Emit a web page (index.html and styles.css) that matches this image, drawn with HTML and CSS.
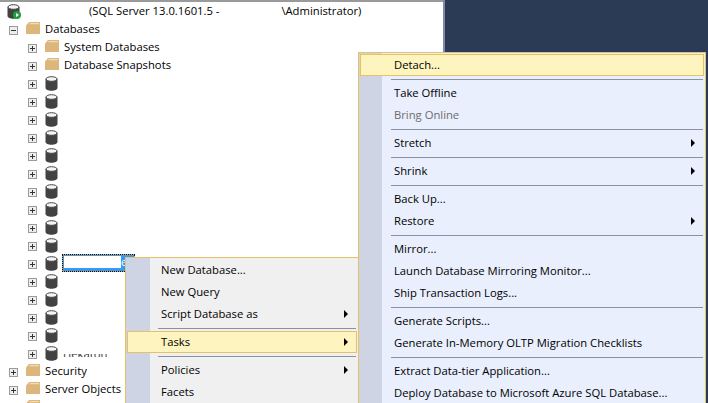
FILE: index.html
```html
<!DOCTYPE html>
<html>
    <head>
        <title>Object Explorer</title>
        <link rel="stylesheet" href="styles.css">
    </head>
    <body>
        <svg class="defs" width="0" height="0">
            <symbol id="db" viewBox="0 0 13 15">
                <path d="M.5 3v9c0 1.500 2.700 2.700 6 2.700s6-1.200 6-2.700V3z" fill="#424242"/>
                <ellipse cx="6.500" cy="3" rx="5.500" ry="2.300" fill="#f4f4f4" stroke="#424242"/>
            </symbol>
            <symbol id="folder" viewBox="0 0 14 12">
                <path d="M0 3.500L3 0h11v12H0z" fill="#dcb67a"/>
                <path d="M4 1h9v1.300H2.800z" fill="#efdcb9"/>
            </symbol>
        </svg>

        <div class="explorer">
            <div class="tree">
                <div class="row server">
                    <svg class="icon db"><use href="#db"/></svg>
                    <svg class="play" viewBox="0 0 8 8"><circle cx="4" cy="4" r="4" fill="#1f9e3c"/><path d="M3 2l3 2-3 2z" fill="#fff"/></svg>
                    <span class="label server-label">(SQL Server 13.0.1601.5 - <span class="blank"></span>\Administrator)</span>
                </div>
                <div class="row lvl1"><span class="exp minus"></span><svg class="icon"><use href="#folder"/></svg><span class="label">Databases</span></div>
                <div class="row lvl2"><span class="exp"></span><svg class="icon"><use href="#folder"/></svg><span class="label">System Databases</span></div>
                <div class="row lvl2"><span class="exp"></span><svg class="icon"><use href="#folder"/></svg><span class="label">Database Snapshots</span></div>
                <div class="row lvl2"><span class="exp"></span><svg class="icon db"><use href="#db"/></svg></div>
                <div class="row lvl2"><span class="exp"></span><svg class="icon db"><use href="#db"/></svg></div>
                <div class="row lvl2"><span class="exp"></span><svg class="icon db"><use href="#db"/></svg></div>
                <div class="row lvl2"><span class="exp"></span><svg class="icon db"><use href="#db"/></svg></div>
                <div class="row lvl2"><span class="exp"></span><svg class="icon db"><use href="#db"/></svg></div>
                <div class="row lvl2"><span class="exp"></span><svg class="icon db"><use href="#db"/></svg></div>
                <div class="row lvl2"><span class="exp"></span><svg class="icon db"><use href="#db"/></svg></div>
                <div class="row lvl2"><span class="exp"></span><svg class="icon db"><use href="#db"/></svg></div>
                <div class="row lvl2"><span class="exp"></span><svg class="icon db"><use href="#db"/></svg></div>
                <div class="row lvl2"><span class="exp"></span><svg class="icon db"><use href="#db"/></svg></div>
                <div class="row lvl2"><span class="exp"></span><svg class="icon db"><use href="#db"/></svg><span class="selected"><span class="sel-fill"><span class="sel-white"></span><span class="sel-end">e</span></span></span></div>
                <div class="row lvl2"><span class="exp"></span><svg class="icon db"><use href="#db"/></svg></div>
                <div class="row lvl2"><span class="exp"></span><svg class="icon db"><use href="#db"/></svg></div>
                <div class="row lvl2"><span class="exp"></span><svg class="icon db"><use href="#db"/></svg></div>
                <div class="row lvl2"><span class="exp"></span><svg class="icon db"><use href="#db"/></svg></div>
                <div class="row lvl2"><span class="exp"></span><svg class="icon db"><use href="#db"/></svg><span class="label cut">Hekaton</span></div>
                <div class="row lvl1"><span class="exp"></span><svg class="icon"><use href="#folder"/></svg><span class="label">Security</span></div>
                <div class="row lvl1"><span class="exp"></span><svg class="icon"><use href="#folder"/></svg><span class="label">Server Objects</span></div>
                <div class="row lvl1"><span class="exp"></span><svg class="icon"><use href="#folder"/></svg><span class="label">Replication</span></div>
            </div>
        </div>
        <div class="backdrop"></div>

        <div class="menu menu-main">
            <div class="item">New Database...</div>
            <div class="item">New Query</div>
            <div class="item arrow">Script Database as</div>
            <div class="sep"></div>
            <div class="item arrow hover">Tasks</div>
            <div class="sep"></div>
            <div class="item arrow">Policies</div>
            <div class="item">Facets</div>
        </div>

        <div class="menu menu-tasks">
            <div class="item hover">Detach...</div>
            <div class="sep"></div>
            <div class="item">Take Offline</div>
            <div class="item off">Bring Online</div>
            <div class="sep"></div>
            <div class="item arrow">Stretch</div>
            <div class="sep"></div>
            <div class="item arrow">Shrink</div>
            <div class="sep"></div>
            <div class="item">Back Up...</div>
            <div class="item arrow">Restore</div>
            <div class="sep"></div>
            <div class="item">Mirror...</div>
            <div class="item">Launch Database Mirroring Monitor...</div>
            <div class="item">Ship Transaction Logs...</div>
            <div class="sep"></div>
            <div class="item">Generate Scripts...</div>
            <div class="item">Generate In-Memory OLTP Migration Checklists</div>
            <div class="sep"></div>
            <div class="item">Extract Data-tier Application...</div>
            <div class="item">Deploy Database to Microsoft Azure SQL Database...</div>
        </div>
    </body>
</html>
```

FILE: styles.css
```css
html, body{
    margin: 0;
    height: 100%;
}
body{
    width: 708px;
    height: 403px;
    overflow: hidden;
    position: relative;
    display: flex;
    background-color: #2b3a55;
    font-family: "Open Sans", sans-serif;
    font-size: 11.25px;
    color: #000;
}
.defs{
    position: absolute;
}
.explorer{
    width: 443px;
    height: 403px;
    box-sizing: border-box;
    border-top: 2px solid #9a9a9a;
    background-color: white;
    overflow: hidden;
}
.tree{
    margin-top: -1px;
}
.backdrop{
    width: 2px;
    background-color: #7e8aa6;
}
.row{
    height: 18px;
    display: flex;
    align-items: center;
    position: relative;
    white-space: nowrap;
}
.server{
    padding-left: 7px;
}
.lvl1{
    padding-left: 9px;
}
.lvl2{
    padding-left: 28px;
}
.exp{
    width: 7px;
    height: 7px;
    margin-right: 8px;
    margin-top: 4px;
    border: 1px solid #9b9b9b;
    background: linear-gradient(#333, #333) center / 5px 1px no-repeat,
                linear-gradient(#333, #333) center / 1px 5px no-repeat,
                #eee;
}
.exp.minus{
    background: linear-gradient(#333, #333) center / 5px 1px no-repeat, #eee;
}
.icon{
    width: 14px;
    height: 12px;
    margin-right: 5px;
    flex: none;
}
.icon.db{
    width: 13px;
    height: 15px;
    margin-right: 4px;
    margin-top: 2px;
}
.play{
    position: absolute;
    left: 13px;
    top: 10px;
    width: 8px;
    height: 8px;
}
.server-label{
    margin-left: 65px;
}
.blank{
    display: inline-block;
    width: 59px;
}
.selected{
    width: 73px;
    height: 18px;
    margin-top: 2px;
    box-sizing: border-box;
    border: 1px dotted #111;
    background-color: #e8a33a;
}
.sel-fill{
    display: flex;
    height: 100%;
    box-sizing: border-box;
    padding: 1px 0 3px 1px;
    background-color: #3399ff;
}
.sel-white{
    display: block;
    width: 57px;
    background-color: white;
}
.sel-end{
    color: white;
    font-size: 10px;
    line-height: 12px;
}
.cut{
    height: 3px;
    overflow: hidden;
    align-self: flex-end;
    margin-bottom: 4px;
    margin-left: 1px;
    line-height: 0;
    color: #333;
}
.menu{
    position: absolute;
    box-sizing: border-box;
    padding: 1px;
    border: 1px solid #e5c365;
}
.menu-main{
    left: 125px;
    top: 257px;
    width: 234px;
    height: 160px;
    background: linear-gradient(#ced4e4, #ced4e4) left / 24px 100% no-repeat, #f0f0f0;
}
.menu-tasks{
    left: 358px;
    top: 52px;
    width: 348px;
    height: 360px;
    background: linear-gradient(#ced4e4, #ced4e4) left / 23px 100% no-repeat, #e9effd;
}
.item{
    height: 22px;
    line-height: 21px;
    box-sizing: border-box;
    padding-left: 34px;
    position: relative;
    white-space: nowrap;
}
.item.off{
    color: #6d6d6d;
}
.item.hover{
    background-color: #fdf4bf;
    border: 1px solid #e5c365;
    padding-left: 33px;
    line-height: 19px;
}
.arrow::after{
    content: "";
    position: absolute;
    right: 9px;
    top: 7px;
    border-left: 4px solid #000;
    border-top: 4px solid transparent;
    border-bottom: 4px solid transparent;
}
.hover.arrow::after{
    top: 6px;
    right: 8px;
}
.sep{
    height: 1px;
    margin: 3px 1px 2px 31px;
    background-color: #8a91a5;
}
```
